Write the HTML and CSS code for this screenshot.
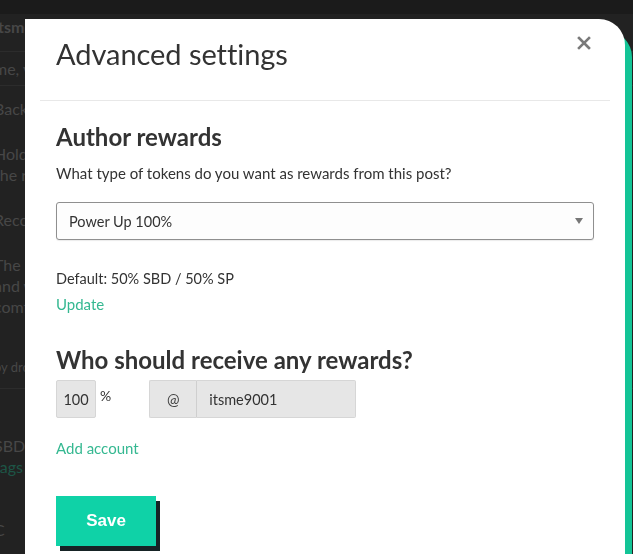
FILE: index.html
```html
<!DOCTYPE html>
<html lang="en">
<head>
    <meta charset="UTF-8">
    <meta name="viewport" content="width=device-width, initial-scale=1.0">
    <title>Advanced settings</title>
    <link rel="stylesheet" href="styles.css">
</head>
<body>
    <div class="page">
        <div class="topbar"></div>
        <div class="feed">
            <div class="row author">itsme9001 · idea</div>
            <div class="row">me, you and the others</div>
            <div class="row text">Back in the day</div>
            <div class="row text">Hold the line and<br>the rest will follow</div>
            <div class="row text">Recovery mode</div>
            <div class="row text">The last one<br>and we went home<br>comfortably</div>
            <div class="row small">by dropping</div>
            <div class="row text gap">SBD / SP<br><span class="tag">tags</span></div>
            <div class="row text last">C</div>
        </div>
    </div>

    <div class="modal">
        <div class="modal-header">
            <h1 class="title">Advanced settings</h1>
            <button class="close" aria-label="Close">
                <svg width="14" height="14" viewBox="0 0 14 14"><path d="M2 2 L12 12 M12 2 L2 12" stroke="#7a7a7a" stroke-width="2.6" stroke-linecap="square"/></svg>
            </button>
        </div>

        <div class="modal-body">
            <h2>Author rewards</h2>
            <p class="hint">What type of tokens do you want as rewards from this post?</p>

            <div class="select">
                <span>Power Up 100%</span>
                <span class="caret"></span>
            </div>

            <p class="default">Default: 50% SBD / 50% SP</p>
            <a class="link" href="#">Update</a>

            <h2 class="beneficiaries">Who should receive any rewards?</h2>
            <div class="bene-row">
                <div class="percent">
                    <span class="field pct">100</span>
                    <span class="pct-sign">%</span>
                </div>
                <div class="account">
                    <span class="at">@</span>
                    <span class="field name">itsme9001</span>
                </div>
            </div>
            <a class="link add" href="#">Add account</a>

            <div class="actions">
                <button class="save">Save</button>
            </div>
        </div>
    </div>
</body>
</html>
```

FILE: styles.css
```css
html, body {
    margin: 0;
    padding: 0;
}

body {
    width: 633px;
    height: 554px;
    overflow: hidden;
    background-color: #222;
    font-family: Lato, "Open Sans", sans-serif;
    color: #333;
}

.page {
    height: 100%;
}

.topbar {
    height: 14px;
    background-color: #1b1b1b;
}

.feed {
    color: #474747;
    font-size: 16px;
    margin-left: -6px;
}

.row {
    border-bottom: 1px solid #2c2c2c;
    padding: 6px 0;
    line-height: 21px;
    white-space: nowrap;
}

.row.author {
    font-weight: bold;
    padding: 2px 0 14px;
}

.row.text {
    border-bottom: none;
    padding: 12px 0;
}

.row.small {
    font-size: 13px;
    padding: 28px 0 10px;
}

.row.gap {
    padding-top: 46px;
}

.row.last {
    padding-top: 30px;
}

.tag {
    color: #1d5546;
}

/* modal */

.modal {
    position: fixed;
    top: 19px;
    left: 25px;
    width: 570px;
    height: 560px;
    padding: 0 15px;
    background-color: #fff;
    border-radius: 0 26px 0 0;
    box-shadow: 7px 12px 0 #13c496;
}

.modal-header {
    display: flex;
    justify-content: space-between;
    align-items: flex-start;
    border-bottom: 1px solid #e8e8e8;
    padding: 0 19px 0 16px;
    height: 81px;
}

.title {
    margin: 17px 0 0;
    font-size: 29px;
    font-weight: normal;
    color: #333;
    letter-spacing: -0.05px;
}

.close {
    background: none;
    border: none;
    padding: 0;
    margin: 17px 0 0;
    cursor: pointer;
}

.modal-body {
    padding: 0 16px;
}

h2 {
    margin: 20px 0 0;
    font-size: 24px;
    font-weight: bold;
    line-height: 32px;
    color: #333;
}

.hint {
    margin: 10px 0 0;
    font-size: 15px;
    line-height: 20px;
}

.select {
    margin-top: 19px;
    height: 36px;
    border: 1px solid #8f8f8f;
    border-radius: 3px;
    background-color: #fdfdfd;
    display: flex;
    align-items: center;
    justify-content: space-between;
    padding: 0 10px 0 12px;
    font-size: 14.5px;
    box-shadow: 0 1px 1px rgba(0,0,0,0.08);
}

.caret {
    width: 0;
    height: 0;
    border-left: 4px solid transparent;
    border-right: 4px solid transparent;
    border-top: 6px solid #777;
}

.default {
    margin: 29px 0 0;
    font-size: 14.5px;
    line-height: 20px;
}

.link {
    display: inline-block;
    margin-top: 5px;
    font-size: 15px;
    line-height: 20px;
    color: #35b891;
    text-decoration: none;
}

.beneficiaries {
    margin-top: 30px;
}

.bene-row {
    display: flex;
    gap: 38px;
    margin-top: 4px;
}

.percent {
    display: flex;
    align-items: flex-start;
    gap: 4px;
}

.field {
    display: flex;
    align-items: center;
    height: 36px;
    background-color: #e6e6e6;
    border: 1px solid #d6d6d6;
    font-size: 14.5px;
    color: #333;
}

.pct {
    width: 38px;
    justify-content: center;
    border-radius: 2px;
}

.pct-sign {
    font-size: 14px;
    margin-top: 7px;
}

.account {
    display: flex;
}

.at {
    width: 46px;
    height: 36px;
    display: flex;
    align-items: center;
    justify-content: center;
    background-color: #e6e6e6;
    border: 1px solid #d6d6d6;
    border-right: 1px solid #cfcfcf;
    border-radius: 2px 0 0 2px;
    font-size: 15px;
    color: #444;
}

.name {
    width: 146px;
    padding-left: 12px;
    border-left: none;
    border-radius: 0 2px 2px 0;
}

.add {
    margin-top: 20px;
}

.actions {
    margin-top: 38px;
}

.save {
    width: 100px;
    height: 50px;
    border: none;
    background-color: #0fd2a7;
    box-shadow: 4px 5px 0 #162325;
    color: #fff;
    font-family: "Liberation Sans", Arial, sans-serif;
    font-weight: bold;
    font-size: 17px;
    cursor: pointer;
}
```
